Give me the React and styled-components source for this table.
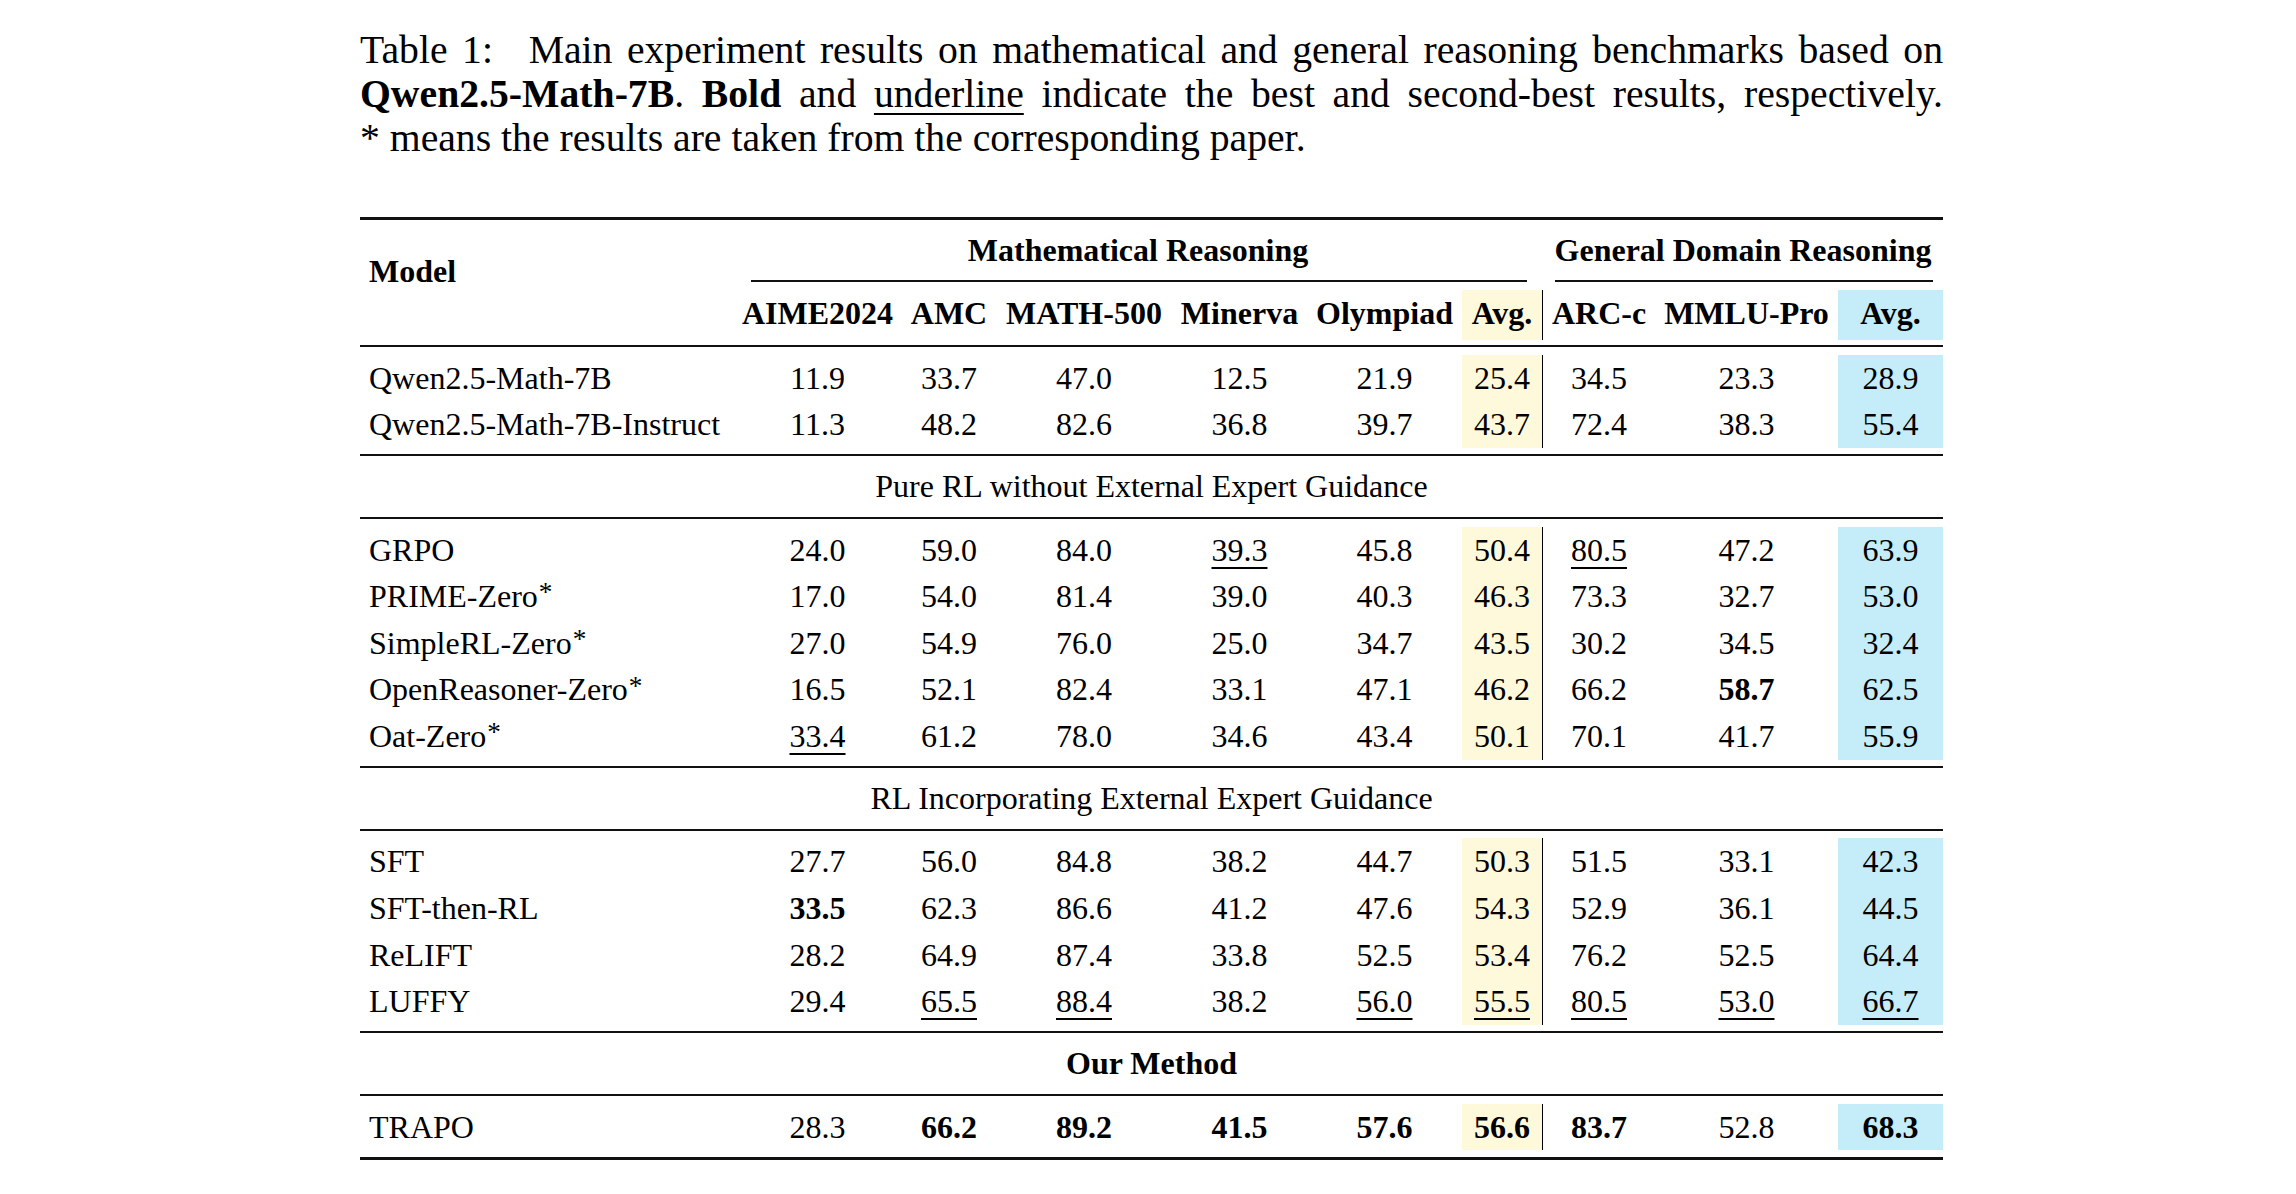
import React from 'react';
import styled, { createGlobalStyle } from 'styled-components';

const GlobalStyle = createGlobalStyle`
  html, body {
    margin: 0;
    padding: 0;
    background: #fff;
  }
  body {
    font-family: "Liberation Serif", "Times New Roman", serif;
    color: #000;
  }
`;

const COLS = '373px 169px 94px 176px 135px 155px 81px 112px 183px 105px';
const SUB_COLS = '169px 94px 176px 135px 155px 81px 112px 183px 105px';
const YELLOW = '#fff9db';
const BLUE = '#c5ecf9';

const subHeads = ['AIME2024', 'AMC', 'MATH-500', 'Minerva', 'Olympiad', 'Avg.', 'ARC-c', 'MMLU-Pro', 'Avg.'];

// b: bold, u: underline
const blocks = [
  {
    rows: [
      ['Qwen2.5-Math-7B', false, '11.9 33.7 47.0 12.5 21.9 25.4 34.5 23.3 28.9'],
      ['Qwen2.5-Math-7B-Instruct', false, '11.3 48.2 82.6 36.8 39.7 43.7 72.4 38.3 55.4'],
    ],
  },
  {
    title: 'Pure RL without External Expert Guidance',
    rows: [
      ['GRPO', false, '24.0 59.0 84.0 u:39.3 45.8 50.4 u:80.5 47.2 63.9'],
      ['PRIME-Zero', true, '17.0 54.0 81.4 39.0 40.3 46.3 73.3 32.7 53.0'],
      ['SimpleRL-Zero', true, '27.0 54.9 76.0 25.0 34.7 43.5 30.2 34.5 32.4'],
      ['OpenReasoner-Zero', true, '16.5 52.1 82.4 33.1 47.1 46.2 66.2 b:58.7 62.5'],
      ['Oat-Zero', true, 'u:33.4 61.2 78.0 34.6 43.4 50.1 70.1 41.7 55.9'],
    ],
  },
  {
    title: 'RL Incorporating External Expert Guidance',
    rows: [
      ['SFT', false, '27.7 56.0 84.8 38.2 44.7 50.3 51.5 33.1 42.3'],
      ['SFT-then-RL', false, 'b:33.5 62.3 86.6 41.2 47.6 54.3 52.9 36.1 44.5'],
      ['ReLIFT', false, '28.2 64.9 87.4 33.8 52.5 53.4 76.2 52.5 64.4'],
      ['LUFFY', false, '29.4 u:65.5 u:88.4 38.2 u:56.0 u:55.5 u:80.5 u:53.0 u:66.7'],
    ],
  },
  {
    title: 'Our Method',
    boldTitle: true,
    rows: [
      ['TRAPO', false, '28.3 b:66.2 b:89.2 b:41.5 b:57.6 b:56.6 b:83.7 52.8 b:68.3'],
    ],
  },
];

const toneOf = (i) => (i === 5 ? 'yellow' : i === 8 ? 'blue' : null);

const Page = styled.div`
  padding: 28px 0 40px 360px;
`;

const Figure = styled.div`
  width: 1583px;
`;

const Caption = styled.div`
  font-size: 39.7px;
  line-height: 44px;
  margin-bottom: 57px;
`;

const CaptionLine = styled.div`
  text-align: justify;
  text-align-last: ${(p) => (p.$last ? 'left' : 'justify')};
`;

const Label = styled.span`
  margin-right: 0.9em;
`;

const Strong = styled.b`
  font-weight: bold;
`;

const Under = styled.span`
  text-decoration: underline;
  text-decoration-thickness: 1.5px;
  text-underline-offset: 6px;
`;

const Table = styled.div`
  width: 1583px;
  font-size: 32px;
`;

const Rule = styled.div`
  height: ${(p) => (p.$heavy ? '3px' : '2px')};
  background: #111;
`;

const Header = styled.div`
  display: flex;
`;

const ModelHead = styled.div`
  width: 373px;
  box-sizing: border-box;
  padding: 32px 9px 0;
  font-weight: bold;
  line-height: 38px;
`;

const HeadRight = styled.div`
  flex: 1;
  display: flex;
  flex-direction: column;
  padding-bottom: 5px;
`;

const GroupRow = styled.div`
  display: grid;
  grid-template-columns: 810px 400px;
  height: 61px;
`;

const Group = styled.div`
  display: flex;
  flex-direction: column;
  justify-content: space-between;
  font-weight: bold;
  text-align: center;
  line-height: 60px;
`;

const CMidRule = styled.div`
  height: 1.5px;
  background: #111;
  margin: ${(p) => p.$trim};
`;

const SubRow = styled.div`
  display: grid;
  grid-template-columns: ${SUB_COLS};
  margin-top: 9px;
  height: 50px;
`;

const Cell = styled.div`
  text-align: center;
  white-space: nowrap;
  background: ${(p) => (p.$tone === 'yellow' ? YELLOW : p.$tone === 'blue' ? BLUE : 'transparent')};
  border-right: ${(p) => (p.$tone === 'yellow' ? '1px solid #000' : 'none')};
`;

const SubCell = styled(Cell)`
  font-weight: bold;
  line-height: 46px;
`;

const Block = styled.div`
  padding: 7.5px 0 6.2px;
`;

const Row = styled.div`
  display: grid;
  grid-template-columns: ${COLS};
  height: 46.67px;
  line-height: 46.67px;
`;

const ModelCell = styled.div`
  padding-left: 9px;
  white-space: nowrap;
`;

const Star = styled.span`
  font-size: 0.85em;
  vertical-align: 0.22em;
  line-height: 0;
  margin-left: 1px;
`;

const Value = styled.span`
  font-weight: ${(p) => (p.$bold ? 'bold' : 'normal')};
  text-decoration: ${(p) => (p.$under ? 'underline' : 'none')};
  text-decoration-thickness: 1.5px;
  text-underline-offset: 6px;
`;

const Section = styled.div`
  height: 61px;
  line-height: 61px;
  text-align: center;
  font-weight: ${(p) => (p.$bold ? 'bold' : 'normal')};
`;

function DataRow({ name, star, values }) {
  return (
    <Row>
      <ModelCell>
        {name}
        {star && <Star>*</Star>}
      </ModelCell>
      {values.split(' ').map((v, i) => {
        const bold = v.startsWith('b:');
        const under = v.startsWith('u:');
        const text = bold || under ? v.slice(2) : v;
        return (
          <Cell key={i} $tone={toneOf(i)}>
            <Value $bold={bold} $under={under}>{text}</Value>
          </Cell>
        );
      })}
    </Row>
  );
}

export default function App() {
  return (
    <Page>
      <GlobalStyle />
      <Figure>
        <Caption>
          <CaptionLine>
            <Label>Table 1:</Label>Main experiment results on mathematical and general reasoning benchmarks based on
          </CaptionLine>
          <CaptionLine>
            <Strong>Qwen2.5-Math-7B</Strong>. <Strong>Bold</Strong> and <Under>underline</Under> indicate the best and second-best results, respectively.
          </CaptionLine>
          <CaptionLine $last>* means the results are taken from the corresponding paper.</CaptionLine>
        </Caption>

        <Table>
          <Rule $heavy />
          <Header>
            <ModelHead>Model</ModelHead>
            <HeadRight>
              <GroupRow>
                <Group>
                  Mathematical Reasoning
                  <CMidRule $trim="0 16px 0 18px" />
                </Group>
                <Group>
                  General Domain Reasoning
                  <CMidRule $trim="0 10px 0 12px" />
                </Group>
              </GroupRow>
              <SubRow>
                {subHeads.map((h, i) => (
                  <SubCell key={i} $tone={toneOf(i)}>{h}</SubCell>
                ))}
              </SubRow>
            </HeadRight>
          </Header>

          {blocks.map((b, bi) => (
            <React.Fragment key={bi}>
              {b.title && (
                <>
                  <Rule />
                  <Section $bold={b.boldTitle}>{b.title}</Section>
                </>
              )}
              <Rule />
              <Block>
                {b.rows.map(([name, star, values]) => (
                  <DataRow key={name} name={name} star={star} values={values} />
                ))}
              </Block>
            </React.Fragment>
          ))}
          <Rule $heavy />
        </Table>
      </Figure>
    </Page>
  );
}
